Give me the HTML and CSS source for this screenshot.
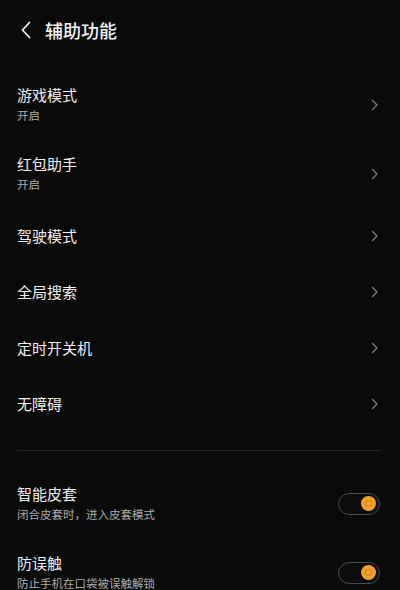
FILE: index.html
```html
<!DOCTYPE html>
<html lang="zh-CN">
<head>
    <meta charset="UTF-8">
    <meta name="viewport" content="width=device-width, initial-scale=1.0">
    <title>辅助功能</title>
    <link rel="stylesheet" href="styles.css">
</head>
<body>
    <header class="bar">
        <svg class="back" width="10" height="18" viewBox="0 0 10 18">
            <path d="M8.5 1.5 L1.5 9 L8.5 16.5" fill="none" stroke="#f2f2f2" stroke-width="1.8" stroke-linecap="round" stroke-linejoin="round"/>
        </svg>
        <h1>辅助功能</h1>
    </header>

    <div class="list">
        <div class="row two">
            <div class="text">
                <div class="name">游戏模式</div>
                <div class="sub">开启</div>
            </div>
            <svg class="arrow" width="7" height="12" viewBox="0 0 7 12"><path d="M1 1 L6 6 L1 11" fill="none" stroke="#7a7a7a" stroke-width="1.4"/></svg>
        </div>
        <div class="row two">
            <div class="text">
                <div class="name">红包助手</div>
                <div class="sub">开启</div>
            </div>
            <svg class="arrow" width="7" height="12" viewBox="0 0 7 12"><path d="M1 1 L6 6 L1 11" fill="none" stroke="#7a7a7a" stroke-width="1.4"/></svg>
        </div>
        <div class="row">
            <div class="name">驾驶模式</div>
            <svg class="arrow" width="7" height="12" viewBox="0 0 7 12"><path d="M1 1 L6 6 L1 11" fill="none" stroke="#7a7a7a" stroke-width="1.4"/></svg>
        </div>
        <div class="row">
            <div class="name">全局搜索</div>
            <svg class="arrow" width="7" height="12" viewBox="0 0 7 12"><path d="M1 1 L6 6 L1 11" fill="none" stroke="#7a7a7a" stroke-width="1.4"/></svg>
        </div>
        <div class="row">
            <div class="name">定时开关机</div>
            <svg class="arrow" width="7" height="12" viewBox="0 0 7 12"><path d="M1 1 L6 6 L1 11" fill="none" stroke="#7a7a7a" stroke-width="1.4"/></svg>
        </div>
        <div class="row">
            <div class="name">无障碍</div>
            <svg class="arrow" width="7" height="12" viewBox="0 0 7 12"><path d="M1 1 L6 6 L1 11" fill="none" stroke="#7a7a7a" stroke-width="1.4"/></svg>
        </div>
    </div>

    <hr class="divider">

    <div class="list">
        <div class="row two">
            <div class="text">
                <div class="name">智能皮套</div>
                <div class="sub">闭合皮套时，进入皮套模式</div>
            </div>
            <span class="toggle on"><span class="knob"></span></span>
        </div>
        <div class="row two">
            <div class="text">
                <div class="name">防误触</div>
                <div class="sub">防止手机在口袋被误触解锁</div>
            </div>
            <span class="toggle on"><span class="knob"></span></span>
        </div>
    </div>
</body>
</html>
```

FILE: styles.css
```css
html, body{
    margin: 0;
    padding: 0;
    background: #0a0a0a;
}

body{
    width: 400px;
    height: 590px;
    overflow: hidden;
    color: #f0f0f0;
    font-family: "Noto Sans CJK SC", "Noto Sans", sans-serif;
}

.bar{
    display: flex;
    align-items: center;
    height: 60px;
    padding: 0 0 0 21px;
}

.back{
    display: block;
}

.bar h1{
    margin: 0 0 0 14px;
    font-size: 18px;
    font-weight: 500;
    line-height: 24px;
    color: #f4f4f4;
}

.list{
    padding: 0 18px 0 17px;
}

.list:first-of-type{
    padding-top: 10px;
}

.row{
    display: flex;
    align-items: center;
    justify-content: space-between;
    height: 56px;
}

.row.two{
    height: 69px;
}

.row.two .text{
    margin-top: -2px;
}

.name{
    font-size: 15px;
    line-height: 22px;
    color: #f0f0f0;
}

.sub{
    font-size: 11.5px;
    line-height: 18px;
    color: #ababab;
}

.arrow{
    display: block;
    margin-right: 4px;
}

.divider{
    margin: 18px 18px 18px 17px;
    border: 0;
    border-top: 1px solid #222;
}

.toggle{
    position: relative;
    display: block;
    width: 40px;
    height: 20px;
    margin-right: 2px;
    border: 1.5px solid #4a4a4a;
    border-radius: 12px;
    background: #0d0d0d;
}

.toggle .knob{
    position: absolute;
    top: 2.5px;
    right: 3px;
    width: 15px;
    height: 15px;
    border-radius: 50%;
    background: radial-gradient(circle, #f7a63a 0 2px, #e08a1a 2.5px 3.5px, #f59f2c 4px);
}
```
